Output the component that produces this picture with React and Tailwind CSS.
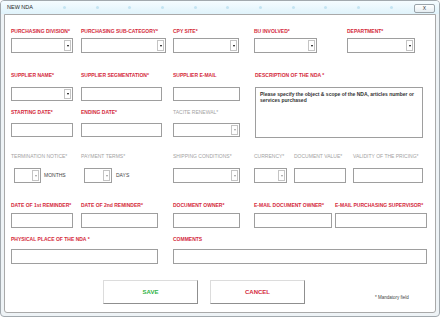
import React from "react";

// small building blocks for the NDA form
function Label({ children, gray, className = "" }) {
  return (
    <div
      className={`h-[9px] leading-[9px] text-[5px] whitespace-nowrap ${
        gray ? "text-[#a3a3a3] font-normal" : "text-[#d42a3c] font-bold"
      } ${className}`}
    >
      {children}
    </div>
  );
}

function Arrow({ disabled }) {
  return (
    <div className="my-[1px] mr-[1px] w-[7px] border border-[#c4c4c4] bg-white flex items-center justify-center">
      <div
        className={`w-0 h-0 border-x-[1.5px] border-x-transparent border-t-[2px] ${
          disabled ? "border-t-[#9a9a9a]" : "border-t-black"
        }`}
      />
    </div>
  );
}

function Box({ className = "", select, disabled }) {
  return (
    <div
      className={`border border-[#9e9e9e] bg-white flex justify-end ${className}`}
    >
      {select && <Arrow disabled={disabled} />}
    </div>
  );
}

function Field({ label, gray, className = "", gap, h = "h-[14px]", select, disabled }) {
  return (
    <div className={`flex flex-col ${className}`}>
      <Label gray={gray}>{label}</Label>
      <Box className={`${gap} ${h}`} select={select} disabled={disabled} />
    </div>
  );
}

export default function App() {
  return (
    <div className="w-[440px] h-[317px] bg-[#eef3f6] border border-[#a2a9ae] rounded-[4px] flex flex-col overflow-hidden font-['Liberation_Sans',Arial,sans-serif]">
      {/* title bar */}
      <div className="h-[13px] shrink-0 relative flex items-center bg-gradient-to-b from-[#f5fcff] to-[#e0f3fb]">
        <span className="ml-[6px] text-[5.5px] text-[#2a2a2a]">NEW NDA</span>
        <div className="ml-[30px] w-[330px] flex justify-between">
          {[...Array(11)].map((_, i) => (
            <div key={i} className="w-[3px] h-[3px] rounded-full bg-[#c4e4f2]" />
          ))}
        </div>
        <div className="absolute right-[4px] top-[3px] w-[21px] h-[9px] rounded-[2px] border border-[#9aa4aa] bg-gradient-to-b from-white to-[#e6eef2] flex items-center justify-center text-[5px] text-[#333] leading-none">
          X
        </div>
      </div>

      {/* form panel */}
      <div className="flex-1 mx-[3px] mb-[3px] bg-white border border-[#a9a9a9] rounded-b-[3px] flex flex-col">
        {/* row 1 */}
        <div className="flex mt-[12px]">
          <Field label="PURCHASING DIVISION*" className="ml-[6px] w-[62px]" gap="mt-[2px]" h="h-[15px]" select />
          <Field label="PURCHASING SUB-CATEGORY*" className="ml-[8px] w-[85px]" gap="mt-[2px]" h="h-[15px]" select />
          <Field label="CPY SITE*" className="ml-[7px] w-[66px]" gap="mt-[2px]" h="h-[15px]" select />
          <Field label="BU INVOLVED*" className="ml-[15px] w-[63px]" gap="mt-[2px]" h="h-[15px]" select />
          <Field label="DEPARTMENT*" className="ml-[30px] w-[68px]" gap="mt-[2px]" h="h-[15px]" select />
        </div>

        {/* rows 2 & 3 with description */}
        <div className="flex mt-[18px]">
          <div className="flex flex-col">
            <div className="flex">
              <Field label="SUPPLIER NAME*" className="ml-[6px] w-[62px]" gap="mt-[7px]" select />
              <Field label="SUPPLIER SEGMENTATION*" className="ml-[8px] w-[81px]" gap="mt-[7px]" />
              <Field label="SUPPLIER E-MAIL" className="ml-[11px] w-[67px]" gap="mt-[7px]" />
            </div>
            <div className="flex mt-[7px]">
              <Field label="STARTING DATE*" className="ml-[6px] w-[62px]" gap="mt-[6px]" />
              <Field label="ENDING DATE*" className="ml-[8px] w-[81px]" gap="mt-[6px]" />
              <Field label="TACITE RENEWAL*" gray className="ml-[11px] w-[67px]" gap="mt-[6px]" select disabled />
            </div>
          </div>
          <div className="ml-[15px] w-[168px] flex flex-col">
            <Label>DESCRIPTION OF THE NDA *</Label>
            <div className="mt-[7px] h-[51px] border border-[#9e9e9e] px-[4px] py-[3px] text-[5px] leading-[6px] font-bold text-[#333]">
              Please specify the object &amp; scope of the NDA, articles number or services purchased
            </div>
          </div>
        </div>

        {/* row 4 */}
        <div className="flex mt-[14px]">
          <div className="ml-[6px] w-[70px] flex flex-col">
            <Label gray>TERMINATION NOTICE*</Label>
            <div className="mt-[7px] flex items-center">
              <Box className="ml-[3px] w-[27px] h-[15px]" select disabled />
              <span className="ml-[3px] text-[5px] text-[#444]">MONTHS</span>
            </div>
          </div>
          <div className="w-[92px] flex flex-col">
            <Label gray>PAYMENT TERMS*</Label>
            <div className="mt-[7px] flex items-center">
              <Box className="ml-[3px] w-[28px] h-[15px]" select disabled />
              <span className="ml-[4px] text-[5px] text-[#444]">DAYS</span>
            </div>
          </div>
          <Field label="SHIPPING CONDITIONS*" gray className="w-[67px]" gap="mt-[7px]" h="h-[15px]" select disabled />
          <Field label="CURRENCY*" gray className="ml-[14px] w-[33px]" gap="mt-[7px]" h="h-[15px]" select disabled />
          <Field label="DOCUMENT VALUE*" gray className="ml-[7px] w-[52px]" gap="mt-[7px]" h="h-[15px]" />
          <Field label="VALIDITY OF THE PRICING*" gray className="ml-[7px] w-[70px]" gap="mt-[7px]" h="h-[15px]" />
        </div>

        {/* row 5 */}
        <div className="flex mt-[18px]">
          <Field label="DATE OF 1st REMINDER*" className="ml-[6px] w-[62px]" gap="mt-[3px]" h="h-[15px]" />
          <Field label="DATE OF 2nd REMINDER*" className="ml-[8px] w-[77px]" gap="mt-[3px]" h="h-[15px]" />
          <Field label="DOCUMENT OWNER*" className="ml-[15px] w-[67px]" gap="mt-[3px]" h="h-[15px]" />
          <Field label="E-MAIL DOCUMENT OWNER*" className="ml-[14px] w-[78px]" gap="mt-[3px]" h="h-[15px]" />
          <Field label="E-MAIL PURCHASING SUPERVISOR*" className="ml-[3px] w-[92px]" gap="mt-[3px]" h="h-[15px]" />
        </div>

        {/* row 6 */}
        <div className="flex mt-[7px]">
          <Field label="PHYSICAL PLACE OF THE NDA *" className="ml-[6px] w-[147px]" gap="mt-[5px]" h="h-[15px]" />
          <Field label="COMMENTS" className="ml-[15px] w-[254px]" gap="mt-[5px]" h="h-[15px]" />
        </div>

        {/* buttons */}
        <div className="flex items-end mt-[16px]">
          <button className="ml-[98px] w-[95px] h-[24px] bg-white border border-[#dcdcdc] border-r-[#8f8f8f] border-b-[#8f8f8f] text-[6px] font-bold text-[#2fb344]">
            SAVE
          </button>
          <button className="ml-[12px] w-[95px] h-[24px] bg-white border border-[#dcdcdc] border-r-[#8f8f8f] border-b-[#8f8f8f] text-[6px] font-bold text-[#d42a3c]">
            CANCEL
          </button>
          <span className="ml-[70px] mb-[2px] text-[4.5px] text-[#444]">* Mandatory field</span>
        </div>
      </div>
    </div>
  );
}
